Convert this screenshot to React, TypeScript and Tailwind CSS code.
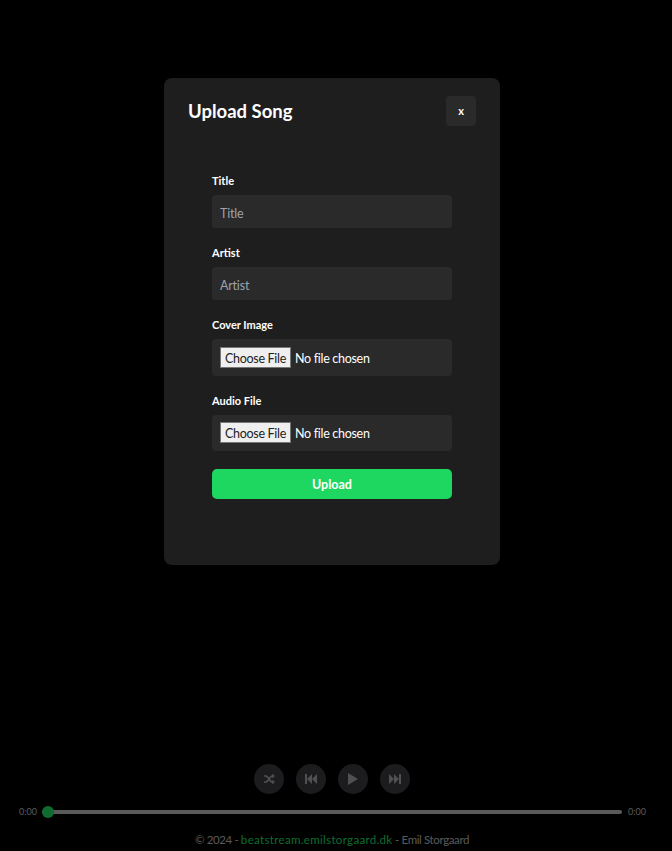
import React from "react";

function Field({ label, children, gap = "mb-[17px]" }: { label: string; children: React.ReactNode; gap?: string }) {
  return (
    <div className={gap}>
      <label className="block text-[11px] leading-[15px] font-bold text-white mb-[7px]">{label}</label>
      {children}
    </div>
  );
}

function TextInput({ placeholder }: { placeholder: string }) {
  return (
    <input
      type="text"
      placeholder={placeholder}
      className="block w-full h-[33px] px-2 pt-[3px] rounded bg-[#2a2a2a] text-[12.5px] tracking-[-0.2px] text-white placeholder:text-[#9ca3af] outline-none"
    />
  );
}

function FileInput({ h }: { h: string }) {
  return (
    <div className={`flex items-center ${h} px-2 rounded bg-[#2a2a2a]`}>
      <input
        type="file"
        className="block w-full text-[12.5px] tracking-[-0.3px] text-white file:mr-1 file:h-[21px] file:w-[71px] file:p-0 file:pt-[2px] file:bg-[#efefef] file:text-[12.5px] file:tracking-[-0.3px] file:text-[#222] file:border file:border-solid file:border-[#767676] file:rounded-none"
      />
    </div>
  );
}

function RoundBtn({ children }: { children: React.ReactNode }) {
  return (
    <button className="w-[30px] h-[30px] rounded-full bg-[#38383c] flex items-center justify-center text-[#a0a0a0]">
      {children}
    </button>
  );
}

export default function App() {
  return (
    <div className="relative h-[851px] bg-black overflow-hidden flex flex-col justify-end pr-2 font-['Lato','Noto_Sans',sans-serif]">
      <div className="flex flex-col items-center">
        <div className="flex gap-3">
          <RoundBtn>
            <svg width="12" height="12" viewBox="0 0 24 24" fill="none" stroke="currentColor" strokeWidth="3.4">
              <path d="M2 6h4c4 0 8 12 12 12h3M2 18h4c4 0 8-12 12-12h3" />
              <path d="M19 2l4 4-4 4zM19 14l4 4-4 4z" fill="currentColor" strokeWidth="1" />
            </svg>
          </RoundBtn>
          <RoundBtn>
            <svg width="12" height="10" viewBox="0 0 12 10" fill="currentColor">
              <rect x="0" y="0" width="2" height="10" />
              <path d="M7 0v10L2 5zM12 0v10L7 5z" />
            </svg>
          </RoundBtn>
          <RoundBtn>
            <svg width="12" height="14" viewBox="0 0 12 14" fill="currentColor">
              <path d="M1 1v12l10-6z" />
            </svg>
          </RoundBtn>
          <RoundBtn>
            <svg width="12" height="10" viewBox="0 0 12 10" fill="currentColor">
              <rect x="10" y="0" width="2" height="10" />
              <path d="M0 0v10l5-5zM5 0v10l5-5z" />
            </svg>
          </RoundBtn>
        </div>
        <div className="w-full flex items-center gap-[6px] px-[19px] mt-[12px] text-[9px] leading-[12px] text-[#b3b3b3]">
          <span className="w-[17px]">0:00</span>
          <div className="relative flex-1 h-1 rounded-full bg-[#b3b3b3]">
            <div className="absolute left-0 top-1/2 -translate-y-1/2 w-3 h-3 rounded-full bg-[#1ed760]" />
          </div>
          <span className="w-[17px]">0:00</span>
        </div>
        <p className="mt-[15px] mb-[4px] text-[11.5px] leading-[14px] tracking-[-0.38px] text-[#b3b3b3]">
          © 2024 - <span className="text-[#1ed760] tracking-[0.33px]">beatstream.emilstorgaard.dk</span> - Emil Storgaard
        </p>
      </div>

      <div className="absolute inset-0 bg-black/50 flex justify-center items-start pr-2">
        <div className="w-[336px] h-[487px] mt-[78px] rounded-lg bg-[#1e1e1e] px-6 pt-[18px]">
          <div className="flex items-center justify-between h-[30px]">
            <h2 className="text-[18.5px] leading-[24px] font-bold text-white">Upload Song</h2>
            <button className="w-[30px] h-[30px] rounded bg-[#2a2a2a] text-white text-[11px] font-bold">x</button>
          </div>
          <form className="px-6 pt-[47px]" onSubmit={(e) => e.preventDefault()}>
            <Field label="Title"><TextInput placeholder="Title" /></Field>
            <Field label="Artist"><TextInput placeholder="Artist" /></Field>
            <Field label="Cover Image"><FileInput h="h-[37px]" /></Field>
            <Field label="Audio File" gap="mb-[18px]"><FileInput h="h-[36px]" /></Field>
            <button className="block w-full h-[30px] pt-[2px] rounded-[5px] bg-[#1ed760] text-white text-[12.5px] font-bold">Upload</button>
          </form>
        </div>
      </div>
    </div>
  );
}
